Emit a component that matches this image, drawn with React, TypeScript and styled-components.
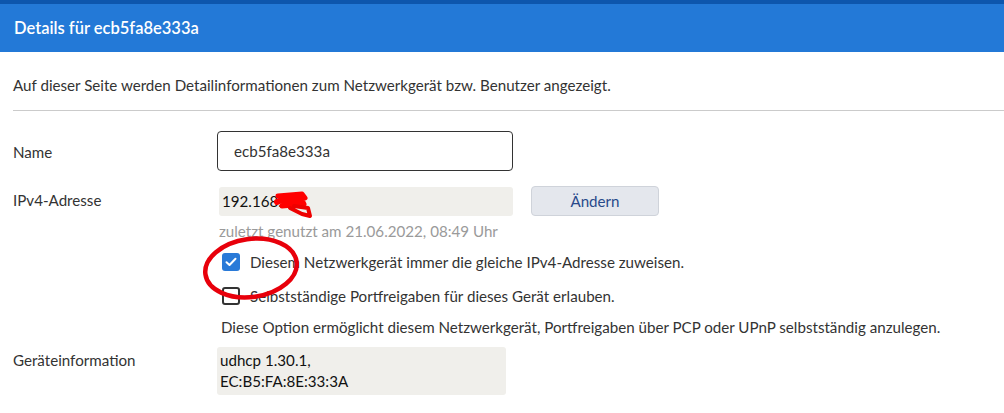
import React from "react";
import styled, { createGlobalStyle } from "styled-components";

const Global = createGlobalStyle`
  html, body { margin: 0; padding: 0; background: #fff; }
  body { font-family: Lato, "Open Sans", sans-serif; color: #333; }
  * { box-sizing: border-box; }
`;

const FS = "15.15px";

const Page = styled.div`
  width: 1004px;
  height: 413px;
  overflow: hidden;
  position: relative;
`;

const TopStrip = styled.div`
  height: 4px;
  background: #0d56ad;
`;

const Header = styled.div`
  height: 48px;
  background: #2379d7;
  display: flex;
  align-items: center;
  padding-left: 14px;
  color: #fff;
  font-size: 16.5px;
  font-weight: 600;
`;

const Intro = styled.p`
  margin: 0;
  padding: 24px 0 0 13px;
  height: 58px;
  font-size: ${FS};
  line-height: 18px;
`;

const Divider = styled.hr`
  margin: 0 0 0 13px;
  border: 0;
  border-top: 1px solid #cbcbcb;
`;

const Form = styled.div`
  padding: 20px 0 0 13px;
  display: grid;
  grid-template-columns: 204px 1fr;
`;

const Label = styled.div<{ $top: number }>`
  font-size: ${FS};
  line-height: 18px;
  padding-top: ${(p) => p.$top}px;
`;

const Field = styled.div`
  display: flex;
  flex-direction: column;
`;

const NameInput = styled.div`
  width: 296px;
  height: 40px;
  border: 1px solid #333;
  border-radius: 4px;
  display: flex;
  align-items: center;
  padding-left: 16px;
  font-size: ${FS};
  margin-bottom: 15px;
`;

const IpRow = styled.div`
  display: flex;
  align-items: center;
  gap: 18px;
  margin-left: 2px;
`;

const ReadBox = styled.div<{ $w: number; $h: number }>`
  width: ${(p) => p.$w}px;
  min-height: ${(p) => p.$h}px;
  background: #f0efeb;
  border-radius: 3px;
  padding: 3px 3px;
  font-size: ${FS};
  line-height: 21px;
  color: #111;
  display: flex;
  flex-direction: column;
  justify-content: center;
`;

const Button = styled.button`
  width: 128px;
  height: 30px;
  background: #e4e7ed;
  border: 1px solid #cfd3da;
  border-radius: 4px;
  color: #28498a;
  font-family: inherit;
  font-size: ${FS};
`;

const Hint = styled.div`
  color: #9a9a9a;
  font-size: ${FS};
  line-height: 18px;
  margin: 6px 0 0 2px;
`;

const CheckRow = styled.label`
  display: flex;
  align-items: center;
  gap: 10px;
  margin-left: 5px;
  font-size: ${FS};
  line-height: 18px;
  height: 18px;
`;

const Box = styled.span<{ $checked?: boolean }>`
  width: 18px;
  height: 18px;
  border-radius: 3px;
  display: inline-flex;
  align-items: center;
  justify-content: center;
  background: ${(p) => (p.$checked ? "#2a7ad8" : "#fff")};
  border: ${(p) => (p.$checked ? "none" : "2px solid #333")};
`;

const Checks = styled.div`
  display: flex;
  flex-direction: column;
  gap: 16px;
  margin-top: 13px;
`;

const Note = styled.div`
  font-size: ${FS};
  line-height: 18px;
  margin: 13px 0 0 4px;
`;

const Spacer = styled.div<{ $h: number }>`
  grid-column: 1 / -1;
  height: ${(p) => p.$h}px;
`;

const Overlay = styled.svg`
  position: absolute;
  pointer-events: none;
`;

export default function App() {
  return (
    <Page>
      <Global />
      <TopStrip />
      <Header>Details für ecb5fa8e333a</Header>
      <Intro>
        Auf dieser Seite werden Detailinformationen zum Netzwerkgerät bzw. Benutzer angezeigt.
      </Intro>
      <Divider />
      <Form>
        <Label $top={12}>Name</Label>
        <Field>
          <NameInput>ecb5fa8e333a</NameInput>
        </Field>

        <Label $top={5}>IPv4-Adresse</Label>
        <Field>
          <IpRow>
            <ReadBox $w={294} $h={29}>192.168.</ReadBox>
            <Button>Ändern</Button>
          </IpRow>
          <Hint>zuletzt genutzt am 21.06.2022, 08:49 Uhr</Hint>
          <Checks>
            <CheckRow>
              <Box $checked>
                <svg width="12" height="10" viewBox="0 0 12 10">
                  <path d="M1.5 5.2 L4.5 8 L10.5 1.8" fill="none" stroke="#fff" strokeWidth="2" strokeLinecap="round" strokeLinejoin="round" />
                </svg>
              </Box>
              Diesem Netzwerkgerät immer die gleiche IPv4-Adresse zuweisen.
            </CheckRow>
            <CheckRow>
              <Box />
              Selbstständige Portfreigaben für dieses Gerät erlauben.
            </CheckRow>
          </Checks>
          <Note>
            Diese Option ermöglicht diesem Netzwerkgerät, Portfreigaben über PCP oder UPnP selbstständig anzulegen.
          </Note>
        </Field>

        <Spacer $h={11} />
        <Label $top={4}>Geräteinformation</Label>
        <Field>
          <ReadBox $w={289} $h={46}>
            <span>udhcp 1.30.1,</span>
            <span>EC:B5:FA:8E:33:3A</span>
          </ReadBox>
        </Field>
      </Form>

      <Overlay style={{ left: 272, top: 188 }} width="46" height="34" viewBox="0 0 46 34">
        <path d="M6 8 L30 6 L33 10 L8 13 L30 12 L32 16 L10 18" fill="none" stroke="#ff0000" strokeWidth="5" strokeLinecap="round" strokeLinejoin="round" />
        <path d="M22 18 L36 20 L38 28 L30 26 L18 20" fill="none" stroke="#ee0000" strokeWidth="4" strokeLinecap="round" strokeLinejoin="round" />
        <path d="M5 14 L14 10" stroke="#ff0000" strokeWidth="6" strokeLinecap="round" />
      </Overlay>

      <Overlay style={{ left: 198, top: 231 }} width="106" height="74" viewBox="0 0 106 74">
        <ellipse cx="53" cy="37" rx="46" ry="29" transform="rotate(-8 53 37)" fill="none" stroke="#e8000b" strokeWidth="4.5" />
      </Overlay>
    </Page>
  );
}
